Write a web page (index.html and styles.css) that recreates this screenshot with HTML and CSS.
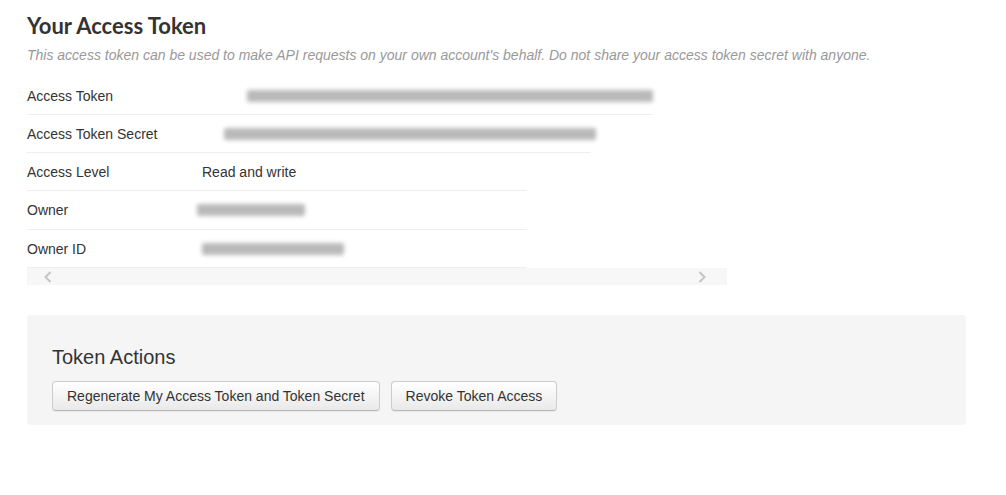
FILE: index.html
```html
<!DOCTYPE html>
<html>
<head>
<meta charset="utf-8">
<link rel="stylesheet" href="styles.css">
</head>
<body>
<div class="page">
  <h2 class="title">Your Access Token</h2>
  <p class="lead">This access token can be used to make API requests on your own account's behalf. Do not share your access token secret with anyone.</p>
  <div class="details">
    <div class="row row-w1"><div class="label">Access Token</div><div class="val off-45"><span class="blur w406"></span></div></div>
    <div class="row row-w2"><div class="label">Access Token Secret</div><div class="val off-22"><span class="blur w372"></span></div></div>
    <div class="row row-w3"><div class="label">Access Level</div><div class="val">Read and write</div></div>
    <div class="row row-w3 row-tall"><div class="label">Owner</div><div class="val off-m5"><span class="blur w108"></span></div></div>
    <div class="row row-w3"><div class="label">Owner ID</div><div class="val"><span class="blur w142"></span></div></div>
  </div>
  <div class="scrollbar">
    <svg class="chev" width="8" height="12" viewBox="0 0 8 12"><path d="M6.5 1 L1.5 6 L6.5 11" fill="none" stroke="#c4c4c4" stroke-width="2"/></svg>
    <svg class="chev" width="8" height="12" viewBox="0 0 8 12"><path d="M1.5 1 L6.5 6 L1.5 11" fill="none" stroke="#c4c4c4" stroke-width="2"/></svg>
  </div>
  <div class="panel">
    <h3 class="panel-title">Token Actions</h3>
    <div class="actions">
      <button class="btn">Regenerate My Access Token and Token Secret</button>
      <button class="btn">Revoke Token Access</button>
    </div>
  </div>
</div>
</body>
</html>
```
FILE: styles.css
```css
html, body {
  margin: 0;
  padding: 0;
  background: #fff;
}
body {
  font-family: "Liberation Sans", Arial, sans-serif;
  font-size: 14px;
  color: #333;
}
.page {
  padding: 12px 40px 0 27px;
}
.title {
  margin: 0;
  font-family: Lato, "Liberation Sans", sans-serif;
  font-weight: 700;
  font-size: 22px;
  line-height: 27px;
  color: #333;
}
.lead {
  margin: 6px 0 12px;
  font-style: italic;
  color: #999;
  line-height: 20px;
}
.row {
  display: flex;
  padding: 9px 0 8px;
  line-height: 20px;
  border-bottom: 1px solid #eee;
}
.row-tall { padding-bottom: 9px; }
.row-w1 { width: 626px; }
.row-w2 { width: 564px; }
.row-w3 { width: 500px; }
.label {
  width: 175px;
  flex: none;
}
.val {
  display: flex;
  align-items: center;
}
.off-45 { margin-left: 45px; }
.off-22 { margin-left: 22px; }
.off-m5 { margin-left: -5px; }
.blur {
  display: block;
  height: 12px;
  background: #b9b9b9;
  filter: blur(2px);
  border-radius: 2px;
}
.w406 { width: 406px; }
.w372 { width: 372px; }
.w108 { width: 108px; }
.w142 { width: 142px; }
.scrollbar {
  width: 700px;
  height: 17px;
  background: #f7f7f7;
  display: flex;
  justify-content: space-between;
  align-items: center;
  padding: 0 21px 0 17px;
  box-sizing: border-box;
}
.panel {
  margin-top: 30px;
  background: #f5f5f5;
  border-radius: 4px;
  padding: 30px 25px 14px;
}
.panel-title {
  margin: 0 0 12px;
  font-weight: 400;
  font-size: 20px;
  line-height: 24px;
  color: #333;
}
.actions {
  display: flex;
  gap: 11px;
}
.btn {
  font-family: "Liberation Sans", Arial, sans-serif;
  font-size: 14px;
  color: #333;
  height: 30px;
  padding: 0 14px;
  border: 1px solid #ccc;
  border-bottom-color: #b8b8b8;
  border-radius: 4px;
  background: linear-gradient(#fff, #e9e9e9);
  box-shadow: 0 1px 1px rgba(0,0,0,0.06);
}
```
